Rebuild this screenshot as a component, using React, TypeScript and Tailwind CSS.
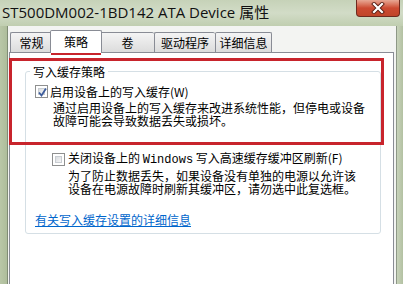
import React from 'react'

const cjk = '"Noto Sans CJK SC", sans-serif'

function Tab({ label, width, selected }: { label: string; width: string; selected?: boolean }) {
  if (selected) {
    return (
      <div
        className={`${width} relative z-10 -mx-[2px] -mb-[1px] h-[23px] flex items-center justify-center border border-b-0 border-[#898c95] rounded-t-[2px] bg-white text-[12px] text-black`}
      >
        {label}
      </div>
    )
  }
  return (
    <div
      className={`${width} h-[20px] flex items-center justify-center border border-b-0 border-r-0 last:border-r border-[#898c95] rounded-t-[2px] bg-gradient-to-b from-[#f4f4f4] to-[#dcdcdc] text-[12px] text-black`}
    >
      {label}
    </div>
  )
}

function CheckBox({ checked }: { checked?: boolean }) {
  return (
    <div className="w-[13px] h-[13px] shrink-0 border border-[#8e8f8f] bg-white p-[2px]">
      <div className="w-full h-full relative bg-gradient-to-br from-[#d9dce0] to-[#f6f6f6] border border-[#c9cdd2]">
        {checked && (
          <svg className="absolute -left-[2px] -top-[2px]" width="11" height="11" viewBox="0 0 11 11">
            <path d="M2 5.5 L4.5 8.5 L9 1.5" fill="none" stroke="#3c5c9c" strokeWidth="1.8" />
          </svg>
        )}
      </div>
    </div>
  )
}

export default function App() {
  return (
    <div className="relative w-[403px] h-[284px] overflow-hidden flex flex-col bg-[#c2cfb3]" style={{ fontFamily: cjk }}>
      {/* title bar */}
      <div className="h-[26px] shrink-0 flex items-start justify-between bg-gradient-to-b from-[#c6d2b8] via-[#d2dcc7] to-[#c0ceb0]">
        <span
          className="pl-[2px] pt-[2px] text-[15px] leading-[20px] text-[#111]"
          style={{ fontFamily: '"Open Sans", "Noto Sans CJK SC", sans-serif' }}
        >
          ST500DM002-1BD142 ATA Device 属性
        </span>
        <div className="mr-[3px] w-[44px] h-[17px] flex items-center justify-center rounded-b-[4px] border border-t-0 border-[#6e2a1f] bg-gradient-to-b from-[#e7a794] via-[#cc4a32] to-[#c0452a]">
          <svg width="14" height="12" viewBox="0 0 14 12">
            <path d="M3 2 L11 10 M11 2 L3 10" stroke="#5a1e14" strokeWidth="4" strokeLinecap="square" />
            <path d="M3 2 L11 10 M11 2 L3 10" stroke="#ffffff" strokeWidth="2.2" strokeLinecap="square" />
          </svg>
        </div>
      </div>

      {/* body */}
      <div className="flex-1 flex">
        <div className="w-[8px] shrink-0 bg-gradient-to-r from-[#b9c7a7] to-[#aebd9b] border-r border-[#7f8c74]" />
        <div className="flex-1 flex flex-col bg-[#f3f4f2] pl-[1px] pr-[2px] pt-[4px]">
          <div className="h-[22px] flex items-end pl-[1px]">
            <Tab label="常规" width="w-[42px]" />
            <Tab label="策略" width="w-[52px]" selected />
            <Tab label="卷" width="w-[54px]" />
            <Tab label="驱动程序" width="w-[61px]" />
            <Tab label="详细信息" width="w-[57px]" />
          </div>
          <div className="flex-1 bg-white border border-b-0 border-[#898c95] pl-[15px] pt-[12px]">
            <fieldset className="w-[356px] border border-[#d5dfe5] rounded-[3px] pb-[7px]">
              <legend className="ml-[4px] px-[3px] text-[12px] leading-[13px] text-black">写入缓存策略</legend>
              <div className="mt-[7px] pl-[9px] flex items-center gap-[2px] text-[12px] leading-[13px] text-black">
                <CheckBox checked />
                <span>启用设备上的写入缓存(W)</span>
              </div>
              <p className="mt-[3px] ml-[27px] w-[314px] text-[12px] leading-[13px] text-black">
                通过启用设备上的写入缓存来改进系统性能，但停电或设备故障可能会导致数据丢失或损坏。
              </p>
              <div className="mt-[24px] pl-[26px] flex items-center gap-[3px] text-[12px] leading-[13px] text-black">
                <CheckBox />
                <span>
                  关闭设备上的 <span style={{ fontFamily: '"Liberation Mono", monospace' }}>Windows</span> 写入高速缓存缓冲区刷新(F)
                </span>
              </div>
              <p className="mt-[2px] ml-[42px] w-[290px] text-[12px] leading-[13px] text-black">
                为了防止数据丢失，如果设备没有单独的电源以允许该设备在电源故障时刷新其缓冲区，请勿选中此复选框。
              </p>
              <div className="mt-[18px] pl-[9px] text-[12px] leading-[13px]">
                <a className="text-[#0066cc] underline">有关写入缓存设置的详细信息</a>
              </div>
            </fieldset>
          </div>
        </div>
        <div className="w-[7px] shrink-0 border-l border-[#8d9886] bg-gradient-to-r from-[#c8d3bb] to-[#b3c1a2]" />
      </div>

      {/* red annotation boxes */}
      <div className="absolute left-[51px] top-[31px] w-[50px] h-[24px] border-[3px] border-[#c8242c]" />
      <div className="absolute left-[9px] top-[58px] w-[375px] h-[87px] border-[3px] border-[#c8242c]" />
    </div>
  )
}
